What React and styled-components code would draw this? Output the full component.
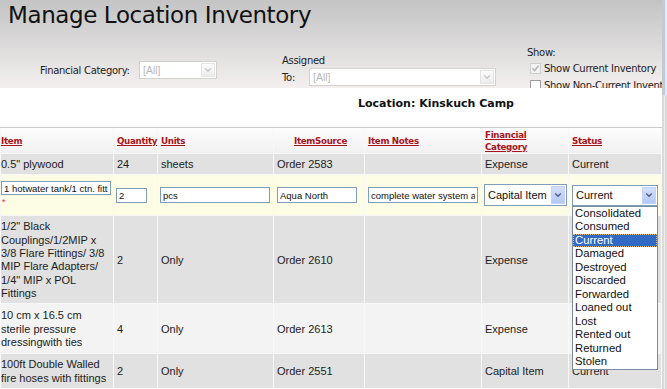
import React from 'react';
import styled, { createGlobalStyle } from 'styled-components';

const Global = createGlobalStyle`
  html, body { margin: 0; padding: 0; background: #fff; }
  body { width: 667px; height: 389px; overflow: hidden; font-family: "Liberation Sans", Arial, sans-serif; }
`;

const Page = styled.div`
  display: flex;
  width: 667px;
  height: 389px;
  overflow: hidden;
`;

const Main = styled.div`
  width: 662px;
  flex: none;
  display: flex;
  flex-direction: column;
`;

const Edge = styled.div`
  flex: 1;
  display: flex;
  flex-direction: column;
`;

const EdgeTop = styled.div`
  height: 95px;
  background: linear-gradient(to right, #c9c9c9 0 2px, #b7c9e4 2px 3px, #e6ebf3 3px);
`;

const EdgeBottom = styled.div`
  flex: 1;
  background: linear-gradient(to right, #dadada 0 2px, #f0f0f0 2px 3px, #d9d9d9 3px);
`;

const Header = styled.header`
  height: 88px;
  overflow: hidden;
  background: linear-gradient(#c4c4c4, #f3efef);
  font-family: "DejaVu Sans", Verdana, sans-serif;
  color: #111;
`;

const Title = styled.h1`
  margin: 0;
  padding-left: 8px;
  height: 45px;
  font-weight: normal;
  font-size: 23px;
  letter-spacing: -0.4px;
  line-height: 30px;
`;

const FilterBar = styled.div`
  display: flex;
  align-items: flex-start;
  padding-left: 40px;
  font-size: 10px;
  letter-spacing: -0.3px;
  color: #222;
`;

const InlineField = styled.div`
  display: flex;
  align-items: center;
  margin-top: ${p => p.top}px;
  margin-left: ${p => p.left || 0}px;
`;

const StackField = styled.div`
  display: flex;
  flex-direction: column;
  margin-top: ${p => p.top}px;
  margin-left: ${p => p.left}px;
`;

const FieldLabel = styled.span`
  width: ${p => p.w}px;
  flex: none;
  white-space: nowrap;
`;

const StackLine = styled.div`
  height: 15px;
  line-height: 15px;
  white-space: nowrap;
`;

const DisabledSelect = styled.div`
  width: ${p => p.w}px;
  height: 18px;
  box-sizing: border-box;
  border: 1px solid #d2d2cc;
  background: #fff;
  display: flex;
  align-items: center;
  padding-left: 3px;
  color: #b9b9b9;
  font-family: "Liberation Sans", Arial, sans-serif;
  font-size: 10.5px;
  letter-spacing: 0;
`;

const DisabledArrow = styled.span`
  margin-left: auto;
  margin-right: 1px;
  width: 14px;
  height: 14px;
  box-sizing: border-box;
  border: 1px solid #e4e4e4;
  background: linear-gradient(#fbfbfb, #ececec);
  display: flex;
  align-items: center;
  justify-content: center;
`;

const CheckRow = styled.div`
  height: 17px;
  display: flex;
  align-items: center;
  padding-left: 3px;
  white-space: nowrap;
`;

const CheckBox = styled.span`
  width: 11px;
  height: 11px;
  box-sizing: border-box;
  border: 1px solid ${p => (p.checked ? '#cfcfcf' : '#9c9c9c')};
  background: ${p => (p.checked ? '#f2f2f2' : '#fff')};
  margin-right: 3px;
  display: flex;
  align-items: center;
  justify-content: center;
  flex: none;
`;

const LocationBar = styled.div`
  height: 39px;
  background: #fff;
  border-bottom: 1px solid #cbcbcb;
  padding-left: 358px;
  font-family: "DejaVu Sans", Verdana, sans-serif;
  font-weight: bold;
  font-size: 11px;
  line-height: 32px;
  color: #111;
`;

const Grid = styled.div`
  display: grid;
  grid-template-columns: 112px 43px 115px 90px 116px 86px 92px;
  gap: 1px;
  padding: 0 0 0 1px;
  background: #f8f8f8;
  font-family: "Liberation Sans", Arial, sans-serif;
  font-size: 11px;
  line-height: 13.33px;
  color: #1c1c1c;
  flex: 1;
  align-content: start;
`;

const HeadCell = styled.div`
  min-height: 24px;
  display: flex;
  align-items: center;
  justify-content: ${p => (p.center ? 'center' : 'flex-start')};
  padding: 1px 0 0 ${p => (p.first ? 0 : 3)}px;
  background: linear-gradient(#fdfdfd, #f1f1f1);
`;

const HeadLink = styled.a`
  font-family: "DejaVu Sans", Verdana, sans-serif;
  font-weight: bold;
  font-size: 8.7px;
  letter-spacing: -0.3px;
  line-height: 12px;
  color: #a8141c;
  text-decoration: underline;
  cursor: pointer;
`;

const tones = {
  gray: '#e1e1e1',
  light: '#f3f3f3',
  edit: '#fdfde6',
};

const Cell = styled.div`
  display: flex;
  align-items: center;
  padding: ${p => p.pad + 1}px 2px ${p => p.pad}px ${p => (p.first ? 0 : 3)}px;
  background: ${p => tones[p.tone]};
`;

const EditCell = styled.div`
  min-height: 40px;
  box-sizing: border-box;
  display: flex;
  flex-direction: ${p => (p.stack ? 'column' : 'row')};
  align-items: ${p => (p.stack ? 'flex-start' : 'center')};
  padding: ${p => (p.stack ? '6px 0 0 0' : '0 0 0 2px')};
  background: ${tones.edit};
`;

const TextInput = styled.input`
  width: ${p => p.w}px;
  height: ${p => p.h}px;
  box-sizing: border-box;
  border: 1px solid #7f9db9;
  background: #fff;
  padding: 0 2px;
  margin: 0 0 0 ${p => p.ml || 0}px;
  font-family: "Liberation Sans", Arial, sans-serif;
  font-size: 9.5px;
  color: #111;
  outline: none;
`;

const Required = styled.span`
  color: #e0302a;
  font-size: 9px;
  line-height: 9px;
  margin-top: 3px;
  padding-left: 1px;
`;

const SelectWrap = styled.div`
  position: relative;
  margin-left: ${p => p.ml || 0}px;
`;

const SelectBox = styled.div`
  width: ${p => p.w}px;
  height: ${p => p.h}px;
  box-sizing: border-box;
  border: 1px solid #7f9db9;
  background: #fff;
  display: flex;
  align-items: center;
  padding-left: 3px;
  font-size: 11px;
  color: #111;
`;

const SelectArrow = styled.span`
  margin-left: auto;
  margin-right: 1px;
  width: 14px;
  height: ${p => p.h}px;
  box-sizing: border-box;
  border: 1px solid #c3d3fd;
  background: linear-gradient(#d3e0fd, #b3c8f5);
  display: flex;
  align-items: center;
  justify-content: center;
`;

const OptionList = styled.ul`
  position: absolute;
  top: 100%;
  left: 0;
  z-index: 5;
  width: 86px;
  box-sizing: border-box;
  margin: 0;
  padding: 0;
  list-style: none;
  background: #fff;
  border: 1px solid #7a8ca3;
  font-size: 11.3px;
  line-height: 13.5px;
  color: #111;
`;

const Option = styled.li`
  padding-left: 2px;
  background: ${p => (p.selected ? '#316ac5' : 'transparent')};
  color: ${p => (p.selected ? '#fff' : '#111')};
  outline: ${p => (p.selected ? '1px dotted #d9b86c' : 'none')};
  outline-offset: -1px;
`;

const Chevron = ({ color }) => (
  <svg width="8" height="6" viewBox="0 0 8 6">
    <path d="M1.2 1.5 L4 4.2 L6.8 1.5" fill="none" stroke={color} strokeWidth="1.5" />
  </svg>
);

const Check = () => (
  <svg width="9" height="9" viewBox="0 0 9 9">
    <path d="M1.5 4.5 L3.6 6.6 L7.6 1.8" fill="none" stroke="#b5b5b5" strokeWidth="1.5" />
  </svg>
);

const headers = [
  { label: 'Item', first: true },
  { label: 'Quantity' },
  { label: 'Units' },
  { label: 'ItemSource', center: true },
  { label: 'Item Notes' },
  { label: ['Financial', 'Category'] },
  { label: 'Status' },
];

const statuses = [
  'Consolidated', 'Consumed', 'Current', 'Damaged', 'Destroyed', 'Discarded',
  'Forwarded', 'Loaned out', 'Lost', 'Rented out', 'Returned', 'Stolen',
];

const firstRow = {
  tone: 'gray', pad: 3, item: ['0.5" plywood'], qty: '24', units: 'sheets', source: 'Order 2583',
  notes: '', fin: 'Expense', status: 'Current',
};

const restRows = [
  {
    tone: 'gray', pad: 3,
    item: ['1/2" Black', 'Couplings/1/2MIP x', '3/8 Flare Fittings/ 3/8', 'MIP Flare Adapters/', '1/4" MIP x POL', 'Fittings'],
    qty: '2', units: 'Only', source: 'Order 2610', notes: '', fin: 'Expense', status: '',
  },
  {
    tone: 'light', pad: 4,
    item: ['10 cm x 16.5 cm', 'sterile pressure', 'dressingwith ties'],
    qty: '4', units: 'Only', source: 'Order 2613', notes: '', fin: 'Expense', status: '',
  },
  {
    tone: 'gray', pad: 3,
    item: ['100ft Double Walled', 'fire hoses with fittings'],
    qty: '2', units: 'Only', source: 'Order 2551', notes: '', fin: 'Capital Item', status: 'Current',
  },
];

const Lines = ({ lines }) => (
  <span>
    {lines.map((l, i) => (
      <React.Fragment key={i}>
        {i > 0 && <br />}
        {l}
      </React.Fragment>
    ))}
  </span>
);

const DataRow = ({ row }) => (
  <>
    <Cell tone={row.tone} pad={row.pad} first><Lines lines={row.item} /></Cell>
    <Cell tone={row.tone} pad={row.pad}>{row.qty}</Cell>
    <Cell tone={row.tone} pad={row.pad}>{row.units}</Cell>
    <Cell tone={row.tone} pad={row.pad}>{row.source}</Cell>
    <Cell tone={row.tone} pad={row.pad}>{row.notes}</Cell>
    <Cell tone={row.tone} pad={row.pad}>{row.fin}</Cell>
    <Cell tone={row.tone} pad={row.pad}>{row.status}</Cell>
  </>
);

export default function App() {
  return (
    <>
      <Global />
      <Page>
        <Main>
          <Header>
            <Title>Manage Location Inventory</Title>
            <FilterBar>
              <InlineField top={16}>
                <FieldLabel w={99}>Financial Category:</FieldLabel>
                <DisabledSelect w={78}>
                  [All]
                  <DisabledArrow><Chevron color="#c6c6c6" /></DisabledArrow>
                </DisabledSelect>
              </InlineField>
              <StackField top={8} left={65}>
                <StackLine>Assigned</StackLine>
                <InlineField top={0}>
                  <FieldLabel w={27}>To:</FieldLabel>
                  <DisabledSelect w={187}>
                    [All]
                    <DisabledArrow><Chevron color="#c6c6c6" /></DisabledArrow>
                  </DisabledSelect>
                </InlineField>
              </StackField>
              <StackField top={0} left={31}>
                <StackLine>Show:</StackLine>
                <CheckRow>
                  <CheckBox checked><Check /></CheckBox>
                  Show Current Inventory
                </CheckRow>
                <CheckRow>
                  <CheckBox />
                  Show Non-Current Inventory
                </CheckRow>
              </StackField>
            </FilterBar>
          </Header>
          <LocationBar>Location: Kinskuch Camp</LocationBar>
          <Grid>
            {headers.map((h, i) => (
              <HeadCell key={i} first={h.first} center={h.center}>
                <HeadLink>{Array.isArray(h.label) ? <Lines lines={h.label} /> : h.label}</HeadLink>
              </HeadCell>
            ))}
            <DataRow row={firstRow} />
            <EditCell stack>
              <TextInput w={110} h={14} readOnly value="1 hotwater tank/1 ctn. fittings" />
              <Required>*</Required>
            </EditCell>
            <EditCell>
              <TextInput w={31} h={15} readOnly value="2" />
            </EditCell>
            <EditCell>
              <TextInput w={110} h={16} readOnly value="pcs" />
            </EditCell>
            <EditCell>
              <TextInput w={80} h={16} ml={1} readOnly value="Aqua North" />
            </EditCell>
            <EditCell>
              <TextInput w={110} h={16} ml={1} readOnly value="complete water system at site" />
            </EditCell>
            <EditCell>
              <SelectWrap>
                <SelectBox w={83} h={22}>
                  Capital Item
                  <SelectArrow h={18}><Chevron color="#4d6185" /></SelectArrow>
                </SelectBox>
              </SelectWrap>
            </EditCell>
            <EditCell>
              <SelectWrap ml={1}>
                <SelectBox w={86} h={21}>
                  Current
                  <SelectArrow h={17}><Chevron color="#4d6185" /></SelectArrow>
                </SelectBox>
                <OptionList>
                  {statuses.map(s => (
                    <Option key={s} selected={s === 'Current'}>{s}</Option>
                  ))}
                </OptionList>
              </SelectWrap>
            </EditCell>
            {restRows.map((r, i) => <DataRow key={i} row={r} />)}
          </Grid>
        </Main>
        <Edge>
          <EdgeTop />
          <EdgeBottom />
        </Edge>
      </Page>
    </>
  );
}
